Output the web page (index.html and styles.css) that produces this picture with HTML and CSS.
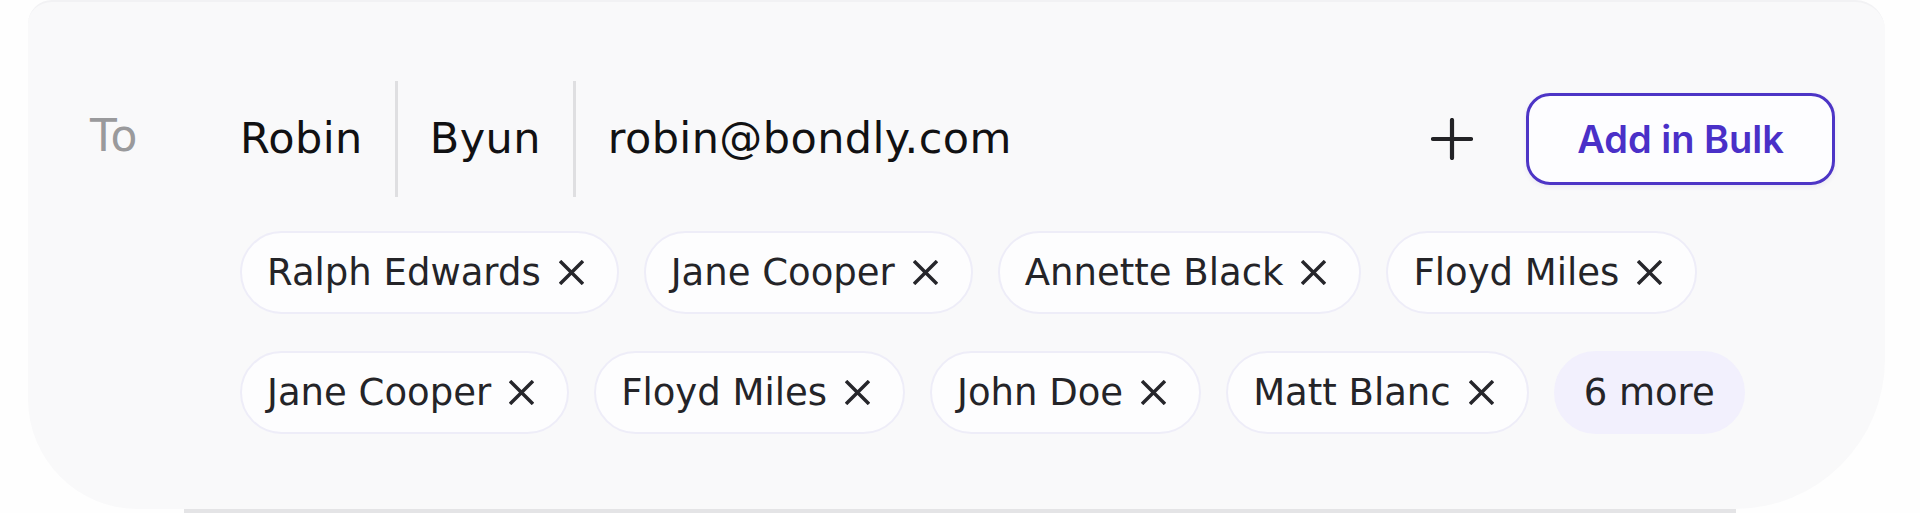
FILE: index.html
```html
<!DOCTYPE html>
<html lang="en">
<head>
    <meta charset="UTF-8">
    <meta name="viewport" content="width=device-width, initial-scale=1.0">
    <title>Recipients</title>
    <link rel="stylesheet" href="styles.css">
</head>
<body>
    <!-- recipient picker -->
    <div class="composer">
        <div class="label">To</div>
        <div class="recipients">
            <div class="entry">
                <span class="field first">Robin</span>
                <span class="sep"></span>
                <span class="field">Byun</span>
                <span class="sep"></span>
                <span class="field">robin@bondly.com</span>
                <button class="add" title="Add recipient">
                    <svg width="42" height="42" viewBox="0 0 42 42"><path d="M21 2v38M2 21h38" stroke="#232326" stroke-width="4.2" stroke-linecap="round" fill="none"/></svg>
                </button>
                <button class="bulk">Add in Bulk</button>
            </div>

            <ul class="chips">
                <li class="chip">Ralph Edwards <span class="remove"><svg width="25" height="25" viewBox="0 0 24 24"><path d="M1 1l22 22M23 1L1 23" stroke="#26262b" stroke-width="3.3" fill="none"/></svg></span></li>
                <li class="chip">Jane Cooper <span class="remove"><svg width="25" height="25" viewBox="0 0 24 24"><path d="M1 1l22 22M23 1L1 23" stroke="#26262b" stroke-width="3.3" fill="none"/></svg></span></li>
                <li class="chip">Annette Black <span class="remove"><svg width="25" height="25" viewBox="0 0 24 24"><path d="M1 1l22 22M23 1L1 23" stroke="#26262b" stroke-width="3.3" fill="none"/></svg></span></li>
                <li class="chip">Floyd Miles <span class="remove"><svg width="25" height="25" viewBox="0 0 24 24"><path d="M1 1l22 22M23 1L1 23" stroke="#26262b" stroke-width="3.3" fill="none"/></svg></span></li>
                <li class="chip">Jane Cooper <span class="remove"><svg width="25" height="25" viewBox="0 0 24 24"><path d="M1 1l22 22M23 1L1 23" stroke="#26262b" stroke-width="3.3" fill="none"/></svg></span></li>
                <li class="chip">Floyd Miles <span class="remove"><svg width="25" height="25" viewBox="0 0 24 24"><path d="M1 1l22 22M23 1L1 23" stroke="#26262b" stroke-width="3.3" fill="none"/></svg></span></li>
                <li class="chip">John Doe <span class="remove"><svg width="25" height="25" viewBox="0 0 24 24"><path d="M1 1l22 22M23 1L1 23" stroke="#26262b" stroke-width="3.3" fill="none"/></svg></span></li>
                <li class="chip">Matt Blanc <span class="remove"><svg width="25" height="25" viewBox="0 0 24 24"><path d="M1 1l22 22M23 1L1 23" stroke="#26262b" stroke-width="3.3" fill="none"/></svg></span></li>
                <li class="chip more">6 more</li>
            </ul>
        </div>
    </div>
    <div class="divider"></div>
</body>
</html>
```

FILE: styles.css
```css
body {
    margin: 0;
    height: 513px;
    overflow: hidden;
    background: #fefefe;
    font-family: "DejaVu Sans", "Noto Sans", sans-serif;
}
.composer {
    display: flex;
    box-sizing: border-box;
    width: 1857px;
    height: 509px;
    margin-left: 28px;
    padding: 79px 50px 0 62px;
    background: #f9f9fa;
    border-top: 2px solid #f2f2f4;
    border-radius: 24px 30px 150px 110px;
}
.label {
    width: 150px;
    padding-top: 34px;
    font-size: 44px;
    line-height: 42px;
    letter-spacing: 1px;
    color: #9a9a9c;
}
.recipients {
    flex: 1;
}
.entry {
    display: flex;
    align-items: center;
    height: 116px;
}
.field {
    padding: 0 32px 2px;
    font-size: 43px;
    letter-spacing: 0.4px;
    color: #111113;
}
.field.first {
    padding-left: 0;
}
.sep {
    align-self: stretch;
    width: 3px;
    background: #dfdfe1;
}
.add {
    margin-left: auto;
    padding: 0;
    border: none;
    background: none;
    display: flex;
    cursor: pointer;
}
.bulk {
    box-sizing: border-box;
    width: 309px;
    height: 92px;
    margin-left: 53px;
    border: 3px solid #4d35c6;
    border-radius: 24px;
    background: #fdfdff;
    box-shadow: 0 2px 5px rgba(60, 40, 160, 0.08);
    font-family: Inter, "Liberation Sans", sans-serif;
    font-weight: 600;
    font-size: 38px;
    color: #4a30c8;
    cursor: pointer;
}
.chips {
    display: flex;
    flex-wrap: wrap;
    column-gap: 25px;
    row-gap: 37px;
    margin: 34px 0 0;
    padding: 0;
    list-style: none;
}
.chip {
    display: flex;
    align-items: center;
    gap: 18px;
    box-sizing: border-box;
    height: 83px;
    padding: 0 33px 0 25px;
    border: 2px solid #eeedf8;
    border-radius: 42px;
    background: #fdfdfe;
    font-size: 37px;
    color: #242428;
}
.remove {
    display: flex;
    cursor: pointer;
}
.chip.more {
    padding: 0 28px;
    border-color: #f2f0fd;
    background: #f2f0fd;
}
.divider {
    width: 1552px;
    height: 4px;
    margin-left: 184px;
    background: #e4e4e6;
}
```
